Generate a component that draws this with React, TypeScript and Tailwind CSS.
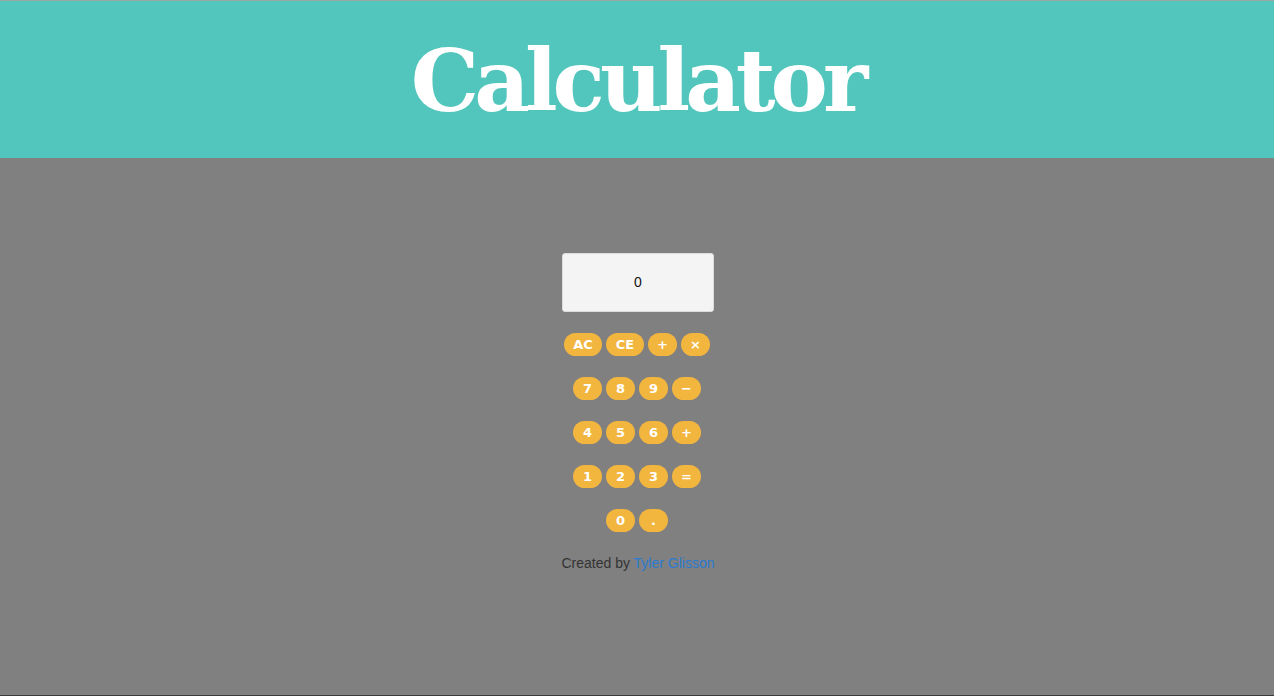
const rows: string[][] = [
  ['AC', 'CE', '+', '×'],
  ['7', '8', '9', '−'],
  ['4', '5', '6', '+'],
  ['1', '2', '3', '='],
  ['0', '.'],
];

function Key({ label }: { label: string }) {
  const wide = label.length > 1;
  return (
    <button
      className={`h-[23px] rounded-full bg-[#f2b53e] text-white text-[13px] font-bold leading-none ${
        wide ? 'min-w-[38px] px-[8px]' : 'min-w-[29px] px-[8px]'
      }`}
      style={{ fontFamily: '"DejaVu Sans", sans-serif' }}
    >
      {label}
    </button>
  );
}

export default function App() {
  return (
    <div className="min-h-[696px] bg-[#808080] flex flex-col border-b border-[#3a3a3a]">
      <header className="h-[158px] bg-[#52c6bc] border-t border-[#9aa7a6] flex items-end justify-center pb-[34px]">
        <h1
          className="text-white font-bold text-[86px] tracking-[-5px] leading-none"
          style={{ fontFamily: '"DejaVu Serif", serif' }}
        >
          Calculator
        </h1>
      </header>

      <main className="flex flex-col items-center pt-[95px]">
        <div
          className="w-[152px] h-[59px] bg-[#f4f4f4] border border-[#dcdcdc] rounded-[3px] flex items-center justify-center text-[14px] text-[#111] translate-x-[1px]"
          style={{ fontFamily: '"Liberation Sans", Arial, sans-serif' }}
        >
          0
        </div>

        <div className="flex flex-col items-center mt-[21px] gap-[21px]">
          {rows.map((row, i) => (
            <div key={i} className="flex gap-[4px]">
              {row.map((k, j) => (
                <Key key={j} label={k} />
              ))}
            </div>
          ))}
        </div>

        <p
          className="mt-[21px] text-[14px] text-[#333] translate-x-[1px]"
          style={{ fontFamily: '"Liberation Sans", Arial, sans-serif' }}
        >
          Created by <a className="text-[#2a7bd0]">Tyler Glisson</a>
        </p>
      </main>
    </div>
  );
}
